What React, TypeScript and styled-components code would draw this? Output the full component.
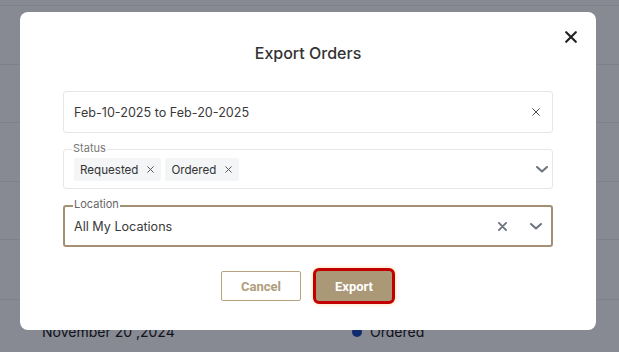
import React from 'react'
import styled, { createGlobalStyle } from 'styled-components'

const GlobalStyle = createGlobalStyle`
  html, body {
    margin: 0;
    padding: 0;
    background: #ffffff;
    font-family: 'Inter', 'Roboto', sans-serif;
  }
  * { box-sizing: border-box; }
`

const Page = styled.main`
  width: 100%;
  height: 352px;
  overflow: hidden;
  background: #ffffff;
`
const Row = styled.div<{ $h?: number }>`
  height: ${p => p.$h ?? 58.6}px;
  border-bottom: 1px solid #efefef;
  display: flex;
  align-items: center;
  padding-left: 42px;
  font-size: 14px;
  color: #222;
`
const DateCell = styled.div`
  width: 310px;
`
const StatusCell = styled.div`
  display: flex;
  align-items: center;
  gap: 8px;
  &::before {
    content: '';
    width: 10px;
    height: 10px;
    border-radius: 50%;
    background: #1f4fb8;
  }
`

const Overlay = styled.div`
  position: fixed;
  inset: 0;
  background: rgba(0, 4, 25, 0.47);
  display: flex;
  justify-content: center;
  align-items: flex-start;
  padding: 12px 3px 0 0;
`
const Modal = styled.div`
  position: relative;
  width: 576px;
  background: #fff;
  border-radius: 8px;
  padding: 31px 43px 26px;
  display: flex;
  flex-direction: column;
`
const CloseBtn = styled.button`
  position: absolute;
  top: 17px;
  right: 17px;
  width: 16px;
  height: 16px;
  padding: 0;
  border: 0;
  background: none;
  display: flex;
  align-items: center;
  justify-content: center;
`
const Title = styled.h2`
  margin: 0 0 28px;
  text-align: center;
  font-size: 16px;
  line-height: 20px;
  font-weight: 500;
  color: #333;
`
const Fields = styled.div`
  display: flex;
  flex-direction: column;
  gap: 16px;
`
const Field = styled.div<{ $h: number; $active?: boolean; $pr?: number }>`
  position: relative;
  height: ${p => p.$h}px;
  border: ${p => (p.$active ? '2px solid #a48f73' : '1px solid #e6e6e6')};
  border-radius: 3px;
  display: flex;
  align-items: center;
  padding: 0 ${p => p.$pr ?? 10}px 0 ${p => (p.$active ? 9 : 10)}px;
`
const FieldLabel = styled.span<{ $active?: boolean }>`
  position: absolute;
  top: ${p => (p.$active ? -9 : -8)}px;
  left: 8px;
  padding: 0 1px;
  background: #fff;
  font-size: 11px;
  line-height: 13px;
  color: ${p => (p.$active ? '#666' : '#777')};
`
const Value = styled.span`
  flex: 1;
  font-size: 12.6px;
  color: #3a3a3a;
`
const Chips = styled.div`
  flex: 1;
  display: flex;
  gap: 4px;
  padding-top: 1px;
`
const Chip = styled.span`
  height: 23px;
  display: inline-flex;
  align-items: center;
  gap: 9px;
  padding: 0 7px 0 6px;
  background: #f4f5f7;
  border-radius: 2px;
  font-size: 11.6px;
  color: #333;
`
const IconSlot = styled.span<{ $w: number; $mr?: number }>`
  width: ${p => p.$w}px;
  margin-right: ${p => p.$mr ?? 0}px;
  display: flex;
  align-items: center;
  justify-content: center;
`
const Actions = styled.div`
  margin-top: 21px;
  display: flex;
  justify-content: center;
  align-items: center;
  gap: 12px;
  font-family: 'Roboto', 'Inter', sans-serif;
`
const Button = styled.button<{ $primary?: boolean }>`
  font-family: inherit;
  font-size: 13px;
  font-weight: 700;
  border-radius: ${p => (p.$primary ? 6 : 2)}px;
  width: ${p => (p.$primary ? 82 : 80)}px;
  height: ${p => (p.$primary ? 36 : 30)}px;
  border: ${p => (p.$primary ? '3px solid #c20000' : '1px solid #b8a27f')};
  background: ${p => (p.$primary ? '#ab9876' : '#fff')};
  color: ${p => (p.$primary ? '#fff' : '#b09d7c')};
  box-shadow: ${p => (p.$primary ? '0 0 4px rgba(255, 170, 60, 0.45)' : 'none')};
`

const XIcon = ({ size, stroke, color }: { size: number; stroke: number; color: string }) => (
  <svg width={size} height={size} viewBox="0 0 10 10" fill="none">
    <path d="M1 1L9 9M9 1L1 9" stroke={color} strokeWidth={stroke} strokeLinecap="round" />
  </svg>
)
const Chevron = ({ color }: { color: string }) => (
  <svg width="12" height="7" viewBox="0 0 12 7" fill="none">
    <path d="M1 1L6 5.5L11 1" stroke={color} strokeWidth="2" strokeLinecap="round" strokeLinejoin="round" />
  </svg>
)

const App = () => {
  return (
    <>
      <GlobalStyle />
      <Page>
        <Row $h={6} />
        <Row />
        <Row />
        <Row />
        <Row />
        <Row $h={60} />
        <Row $h={64}>
          <DateCell>November 20 ,2024</DateCell>
          <StatusCell>Ordered</StatusCell>
        </Row>
      </Page>
      <Overlay>
        <Modal>
          <CloseBtn aria-label="Close">
            <XIcon size={12} stroke={1.8} color="#222" />
          </CloseBtn>
          <Title>Export Orders</Title>
          <Fields>
            <Field $h={42}>
              <Value>Feb-10-2025 to Feb-20-2025</Value>
              <IconSlot $w={12}>
                <XIcon size={8} stroke={1.1} color="#333" />
              </IconSlot>
            </Field>
            <Field $h={40} $pr={4}>
              <FieldLabel>Status</FieldLabel>
              <Chips>
                <Chip>
                  Requested <XIcon size={7} stroke={1.4} color="#555" />
                </Chip>
                <Chip>
                  Ordered <XIcon size={7} stroke={1.4} color="#555" />
                </Chip>
              </Chips>
              <IconSlot $w={12}>
                <Chevron color="#6b7280" />
              </IconSlot>
            </Field>
            <Field $h={42} $active $pr={9}>
              <FieldLabel $active>Location</FieldLabel>
              <Value>All My Locations</Value>
              <IconSlot $w={10} $mr={23}>
                <XIcon size={9} stroke={2} color="#6b7280" />
              </IconSlot>
              <IconSlot $w={12}>
                <Chevron color="#6b7280" />
              </IconSlot>
            </Field>
          </Fields>
          <Actions>
            <Button>Cancel</Button>
            <Button $primary>Export</Button>
          </Actions>
        </Modal>
      </Overlay>
    </>
  )
}

export default App
